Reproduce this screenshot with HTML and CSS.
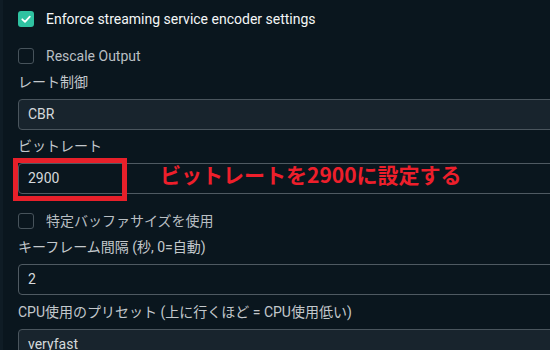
FILE: index.html
```html
<!DOCTYPE html>
<html lang="ja">
<head>
<meta charset="utf-8">
<link rel="stylesheet" href="styles.css">
</head>
<body>
<div class="panel">
  <div class="check-row first">
    <span class="box checked"><svg viewBox="0 0 16 16" width="16" height="16"><path d="M4.3 8.3 L7 10.8 L11.8 5.6" fill="none" stroke="#ffffff" stroke-width="1.8" stroke-linecap="round" stroke-linejoin="round"/></svg></span>
    <span class="check-text bright">Enforce streaming service encoder settings</span>
  </div>
  <div class="check-row second">
    <span class="box"></span>
    <span class="check-text">Rescale Output</span>
  </div>
  <div class="label l1">レート制御</div>
  <div class="select">CBR</div>
  <div class="label l2">ビットレート</div>
  <div class="field-wrap">
    <div class="input">2900</div>
    <div class="highlight"></div>
    <div class="note">ビットレートを2900に設定する</div>
  </div>
  <div class="check-row third">
    <span class="box"></span>
    <span class="check-text">特定バッファサイズを使用</span>
  </div>
  <div class="label l3">キーフレーム間隔 (秒, 0=自動)</div>
  <div class="input">2</div>
  <div class="label l4">CPU使用のプリセット (上に行くほど = CPU使用低い)</div>
  <div class="select">veryfast</div>
</div>
</body>
</html>
```

FILE: styles.css
```css
html, body {
  margin: 0;
  padding: 0;
  width: 550px;
  height: 350px;
  overflow: hidden;
  background: #0a161e;
}
.panel {
  box-sizing: border-box;
  width: 550px;
  height: 350px;
  overflow: hidden;
  border-left: 3px solid #0f1c25;
  padding-left: 15px;
  font-family: Roboto, "Noto Sans CJK JP", sans-serif;
  font-size: 14px;
  color: #c3c8cc;
  display: flex;
  flex-direction: column;
}
.check-row {
  display: flex;
  align-items: center;
  height: 16px;
  gap: 12px;
}
.check-row.first { margin-top: 11px; }
.check-row.second { margin-top: 21px; }
.check-row.third { margin-top: 19px; }
.box {
  box-sizing: border-box;
  width: 16px;
  height: 16px;
  flex: none;
  border: 1.5px solid #47535b;
  border-radius: 3px;
  display: flex;
}
.box.checked {
  background: #2fc2a1;
  border: none;
}
.check-text {
  color: #b9bfc3;
  white-space: nowrap;
  line-height: 16px;
}
.check-text.bright {
  color: #f4f6f7;
}
.label {
  height: 16px;
  line-height: 16px;
  white-space: nowrap;
  color: #c3c8cc;
}
.l1 { margin-top: 10px; }
.l2 { margin-top: 8px; }
.l3 { margin-top: 10px; }
.l4 { margin-top: 9px; }
.select, .input {
  box-sizing: border-box;
  height: 31px;
  width: 545px;
  margin-top: 9px;
  padding-left: 9px;
  line-height: 29px;
  color: #d5d9dc;
  border-radius: 4px;
  flex: none;
}
.select {
  background: #18242d;
  border: 1px solid #4a555d;
}
.input {
  background: #0a161e;
  border: 1px solid #4f5a62;
}
.field-wrap {
  position: relative;
  flex: none;
}
.highlight {
  position: absolute;
  left: -5px;
  top: 4px;
  width: 104px;
  height: 33px;
  border: 5px solid #e8202a;
}
.note {
  position: absolute;
  left: 142px;
  top: 8px;
  font-family: "Noto Sans CJK JP", sans-serif;
  font-weight: 700;
  font-size: 21px;
  line-height: 24px;
  color: #ee1f2b;
  white-space: nowrap;
}
```
